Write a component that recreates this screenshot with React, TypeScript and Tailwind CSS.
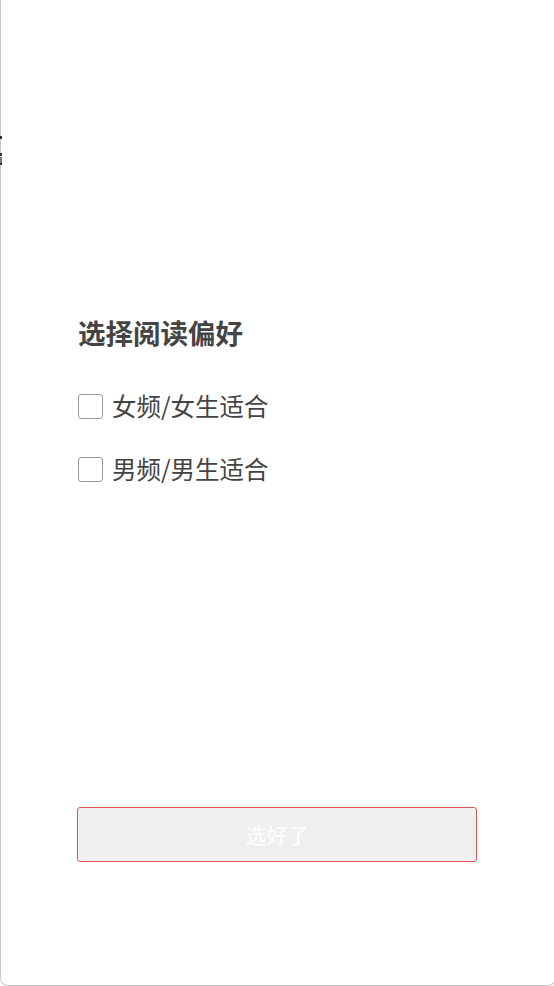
import React from "react";

export default function App() {
  const font = { fontFamily: '"Noto Sans CJK SC", "Noto Sans", sans-serif' };
  return (
    <div className="w-[554px] h-[986px] overflow-hidden bg-white relative" style={font}>
      <div className="w-[556px] h-[986px] border border-t-0 border-[#c8c8c8] rounded-b-[8px] bg-white flex flex-col px-[76px] pt-[314px]">
        <h1 className="text-[27.5px] leading-[36px] font-bold text-[#444] ml-[1px]">选择阅读偏好</h1>
        <div className="mt-[38px] flex flex-col gap-[27px] ml-[1px]">
          {["女频/女生适合", "男频/男生适合"].map((t) => (
            <label key={t} className="flex items-center h-[36px] gap-[9px]">
              <span className="w-[25px] h-[25px] border-[1.5px] border-[#9a9a9a] rounded-[3px] bg-white shrink-0" />
              <span className="text-[24.5px] leading-[36px] text-[#444]">{t}</span>
            </label>
          ))}
        </div>
        <button className="mt-[320px] w-[400px] h-[55px] bg-[#efefef] border border-[#e05555] rounded-[3px] text-white text-[21px] flex items-center justify-center">
          选好了
        </button>
      </div>
      <span className="absolute left-0 top-[136px] w-[2px] h-[3px] bg-[#333]" />
      <span className="absolute left-0 top-[153px] w-[2px] h-[3px] bg-[#333]" />
      <span className="absolute left-0 top-[157px] w-[2px] h-[6px] bg-[#777]" />
      <span className="absolute left-0 top-[163px] w-[2px] h-[2px] bg-[#333]" />
    </div>
  );
}
